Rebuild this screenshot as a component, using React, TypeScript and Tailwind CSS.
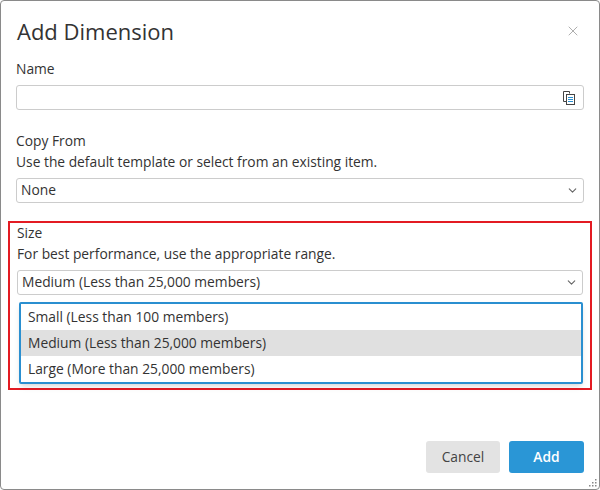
import { X, ChevronDown } from "lucide-react"

const font = { fontFamily: '"Open Sans", "Liberation Sans", sans-serif' }

function CopyIcon() {
  return (
    <svg width="16" height="16" viewBox="0 0 16 16" fill="none" stroke="#444" strokeWidth="1">
      <path d="M2.5 1.5h6v2" />
      <path d="M2.5 1.5v10h3" />
      <rect x="5.5" y="4.5" width="8" height="10" fill="white" />
      <path d="M7 7.5h5M7 9.5h5M7 11.5h5" stroke="#2a8fd0" />
    </svg>
  )
}

export default function App() {
  const sizes = [
    "Small (Less than 100 members)",
    "Medium (Less than 25,000 members)",
    "Large (More than 25,000 members)",
  ]
  return (
    <div style={font} className="w-[600px] h-[490px] bg-white">
      <div className="relative w-full h-full border border-[#8a8a8a] rounded-[4px] flex flex-col text-[#333]">
        <div className="flex items-center justify-between pl-4 pr-[18px] pt-[14px]">
          <h1 className="text-[22px] text-[#333] leading-[32px]">Add Dimension</h1>
          <X className="w-4 h-4 text-[#999]" strokeWidth={1.2} />
        </div>

        <div className="px-[15px] mt-[13px] text-[13.8px]">
          <div className="font-medium leading-[18px]">Name</div>
          <div className="mt-[7px] h-[25px] border border-[#ccc] rounded-[3px] flex items-center justify-end pr-[6px]">
            <CopyIcon />
          </div>

          <div className="mt-[22px] font-medium leading-[18px]">Copy From</div>
          <div className="mt-[3px] leading-[18px]">Use the default template or select from an existing item.</div>
          <div className="mt-[7px] h-[25px] border border-[#ccc] rounded-[3px] flex items-center justify-between pl-[4px] pr-[4px]">
            <span>None</span>
            <ChevronDown className="w-[13px] h-[13px] text-[#666]" />
          </div>
        </div>

        <div className="mx-[7px] mt-[18px] border-2 border-[#e31b23] px-[7px] pt-[1px] pb-[4px] text-[13.8px]">
          <div className="font-medium leading-[18px]">Size</div>
          <div className="mt-[3px] leading-[18px]">For best performance, use the appropriate range.</div>
          <div className="mt-[7px] h-[25px] border border-[#ccc] rounded-[3px] flex items-center justify-between pl-[4px] pr-[4px]">
            <span>Medium (Less than 25,000 members)</span>
            <ChevronDown className="w-[13px] h-[13px] text-[#666]" />
          </div>
          <div className="mt-[7px] ml-[2px] border-2 border-[#2a8fd0] rounded-[2px] shadow-md">
            {sizes.map((s, i) => (
              <div key={s} className={`h-[26px] flex items-center px-[7px] ${i === 1 ? "bg-[#e0e0e0]" : ""}`}>
                {s}
              </div>
            ))}
          </div>
        </div>

        <div className="mt-auto flex justify-end gap-[9px] pr-[15px] pb-[16px]">
          <button className="w-[74px] h-[32px] rounded-[3px] bg-[#e3e3e3] text-[13.8px] text-[#444]">Cancel</button>
          <button className="w-[75px] h-[32px] rounded-[3px] bg-[#2a96d6] text-[13.8px] font-semibold text-white">Add</button>
        </div>

        <svg className="absolute right-[2px] bottom-[2px]" width="8" height="8" viewBox="0 0 8 8" fill="#888">
          <rect x="6" y="0" width="1.5" height="1.5" />
          <rect x="3" y="3" width="1.5" height="1.5" />
          <rect x="6" y="3" width="1.5" height="1.5" />
          <rect x="0" y="6" width="1.5" height="1.5" />
          <rect x="3" y="6" width="1.5" height="1.5" />
          <rect x="6" y="6" width="1.5" height="1.5" />
        </svg>
      </div>
    </div>
  )
}
